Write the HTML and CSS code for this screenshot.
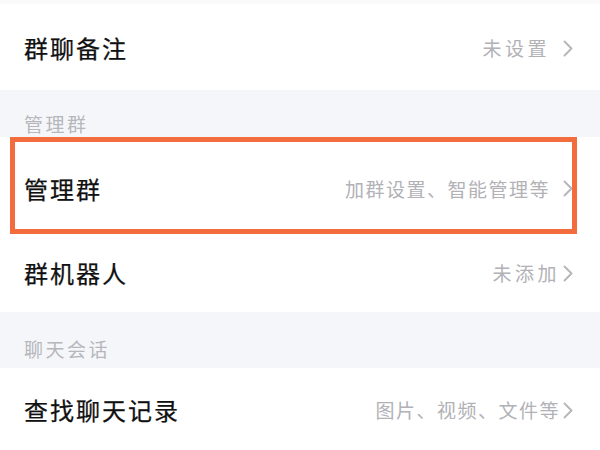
FILE: index.html
```html
<!DOCTYPE html>
<html lang="zh-CN">
<head>
<meta charset="utf-8">
<link rel="stylesheet" href="styles.css">
</head>
<body>
<div class="page">
  <div class="row row-first">
    <span class="label">群聊备注</span>
    <span class="value value-wide">未设置</span>
    <svg class="chev" viewBox="0 0 10 17" width="10" height="17"><polyline points="1.5,1.5 8.5,8.5 1.5,15.5"/></svg>
  </div>
  <div class="section section-one"><span class="section-title">管理群</span></div>
  <div class="row row-highlight">
    <span class="label">管理群</span>
    <span class="value">加群设置、智能管理等</span>
    <svg class="chev" viewBox="0 0 10 17" width="10" height="17"><polyline points="1.5,1.5 8.5,8.5 1.5,15.5"/></svg>
    <div class="highlight"></div>
  </div>
  <div class="row row-third">
    <span class="label">群机器人</span>
    <span class="value value-wide value-tight">未添加</span>
    <svg class="chev" viewBox="0 0 10 17" width="10" height="17"><polyline points="1.5,1.5 8.5,8.5 1.5,15.5"/></svg>
  </div>
  <div class="section section-two"><span class="section-title">聊天会话</span></div>
  <div class="row row-last">
    <span class="label">查找聊天记录</span>
    <span class="value value-tight">图片、视频、文件等</span>
    <svg class="chev" viewBox="0 0 10 17" width="10" height="17"><polyline points="1.5,1.5 8.5,8.5 1.5,15.5"/></svg>
  </div>
</div>
</body>
</html>
```
FILE: styles.css
```css
* { box-sizing: border-box; }
html, body {
  margin: 0;
  padding: 0;
  background: #ffffff;
}
body {
  font-family: "Noto Sans CJK SC", "Noto Sans", sans-serif;
  width: 600px;
  height: 450px;
  overflow: hidden;
}
.page {
  display: flex;
  flex-direction: column;
  border-top: 4px solid #fafafb;
}
.row {
  display: flex;
  align-items: center;
  padding: 0 27px 0 24px;
  background: #ffffff;
}
.row-first { height: 86px; padding-top: 2px; }
.row-highlight { height: 97px; padding-top: 6px; position: relative; }
.row-third { height: 78px; }
.row-last { height: 82px; padding-top: 2px; }
.label {
  flex: 1;
  font-size: 24px;
  line-height: 28px;
  letter-spacing: 2px;
  color: #111111;
  -webkit-text-stroke: 0.25px #111111;
}
.value {
  font-size: 19px;
  line-height: 24px;
  letter-spacing: 1.5px;
  color: #b1b1b6;
  margin-right: 13px;
}
.value-wide { letter-spacing: 3.5px; }
.value-tight { margin-right: 3px; }
.chev {
  display: block;
  fill: none;
  stroke: #b6b6bb;
  stroke-width: 1.9;
  stroke-linecap: round;
  stroke-linejoin: round;
}
.section {
  background: #f5f6fa;
  padding-left: 24px;
}
.section-one { height: 47px; padding-top: 24px; }
.section-two { height: 56px; padding-top: 27px; }
.section-title {
  display: block;
  font-size: 19px;
  line-height: 20px;
  letter-spacing: 2.5px;
  color: #b6b6bb;
}
.highlight {
  position: absolute;
  top: 0;
  bottom: 0;
  left: 10px;
  right: 23px;
  border: 5px solid #f36c3d;
  pointer-events: none;
}
```
